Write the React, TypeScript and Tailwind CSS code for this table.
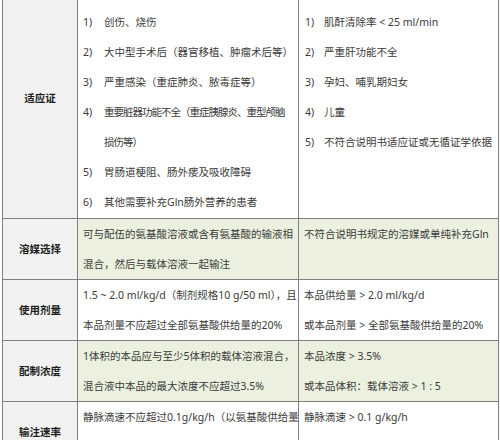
const font = { fontFamily: '"Noto Sans", "Noto Sans CJK SC", sans-serif' };

type Item = { n: string; lines: string[]; tight?: boolean };

const leftList: Item[] = [
  { n: '1)', lines: ['创伤、烧伤'] },
  { n: '2)', lines: ['大中型手术后（器官移植、肿瘤术后等）'] },
  { n: '3)', lines: ['严重感染（重症肺炎、脓毒症等）'] },
  { n: '4)', lines: ['重要脏器功能不全（重症胰腺炎、重型颅脑', '损伤等）'], tight: true },
  { n: '5)', lines: ['胃肠道梗阻、肠外瘘及吸收障碍'] },
  { n: '6)', lines: ['其他需要补充Gln肠外营养的患者'] },
];

const rightList: Item[] = [
  { n: '1)', lines: ['肌酐清除率 < 25 ml/min'] },
  { n: '2)', lines: ['严重肝功能不全'] },
  { n: '3)', lines: ['孕妇、哺乳期妇女'] },
  { n: '4)', lines: ['儿童'] },
  { n: '5)', lines: ['不符合说明书适应证或无循证学依据'] },
];

const rows = [
  {
    label: '溶媒选择',
    green: true,
    mid: ['可与配伍的氨基酸溶液或含有氨基酸的输液相', '混合，然后与载体溶液一起输注'],
    right: ['不符合说明书规定的溶媒或单纯补充Gln'],
  },
  {
    label: '使用剂量',
    green: false,
    mid: ['1.5 ~ 2.0 ml/kg/d（制剂规格10 g/50 ml），且', '本品剂量不应超过全部氨基酸供给量的20%'],
    right: ['本品供给量 > 2.0 ml/kg/d', '或本品剂量 > 全部氨基酸供给量的20%'],
  },
  {
    label: '配制浓度',
    green: true,
    mid: ['1体积的本品应与至少5体积的载体溶液混合，', '混合液中本品的最大浓度不应超过3.5%'],
    right: ['本品浓度 > 3.5%', '或本品体积：载体溶液 > 1 : 5'],
  },
  {
    label: '输注速率',
    green: false,
    mid: ['静脉滴速不应超过0.1g/kg/h（以氨基酸供给量', '计）'],
    right: ['静脉滴速 > 0.1 g/kg/h', ''],
  },
];

function NumList({ items, numW }: { items: Item[]; numW: string }) {
  return (
    <div>
      {items.map((it) => (
        <div key={it.n} className="flex">
          <span className={`${numW} shrink-0`}>{it.n}</span>
          <div className={it.tight ? 'tracking-[-1px]' : ''}>
            {it.lines.map((l) => (
              <div key={l} className="whitespace-nowrap">{l}</div>
            ))}
          </div>
        </div>
      ))}
    </div>
  );
}

export default function App() {
  return (
    <div className="h-[440px] w-[500px] overflow-hidden bg-white pl-[2px]" style={font}>
      <div className="grid w-[497px] grid-cols-[75px_221px_200px] border-l border-[#7f7f7f] text-[10.5px] leading-[30px] text-[#3a3a3a]">
        {/* 适应证 row */}
        <div className="flex items-center justify-center border-b border-r border-[#7f7f7f] bg-[#f2f2f2] pb-[22px] font-bold text-[#1e1e1e]">
          适应证
        </div>
        <div className="border-b border-r border-[#7f7f7f] pb-[1px] pl-[5px] pt-[7px]">
          <NumList items={leftList} numW="w-[21px]" />
        </div>
        <div className="border-b border-r border-[#7f7f7f] pb-[1px] pl-[6px] pt-[7px]">
          <NumList items={rightList} numW="w-[19px]" />
        </div>

        {rows.map((r) => (
          <div key={r.label} className="contents">
            <div className="flex items-center justify-center border-b border-r border-[#7f7f7f] bg-[#f2f2f2] font-bold text-[#1e1e1e]">
              {r.label}
            </div>
            <div className={`border-b border-r border-[#7f7f7f] pl-[5px] ${r.green ? 'bg-[#ebf1de]' : 'bg-white'}`}>
              {r.mid.map((l, i) => (
                <div key={i} className="h-[30px] whitespace-nowrap">{l}</div>
              ))}
            </div>
            <div className={`border-b border-r border-[#7f7f7f] pl-[5px] ${r.green ? 'bg-[#ebf1de]' : 'bg-white'}`}>
              {r.right.map((l, i) => (
                <div key={i} className="h-[30px] whitespace-nowrap">{l}</div>
              ))}
            </div>
          </div>
        ))}
      </div>
    </div>
  );
}
